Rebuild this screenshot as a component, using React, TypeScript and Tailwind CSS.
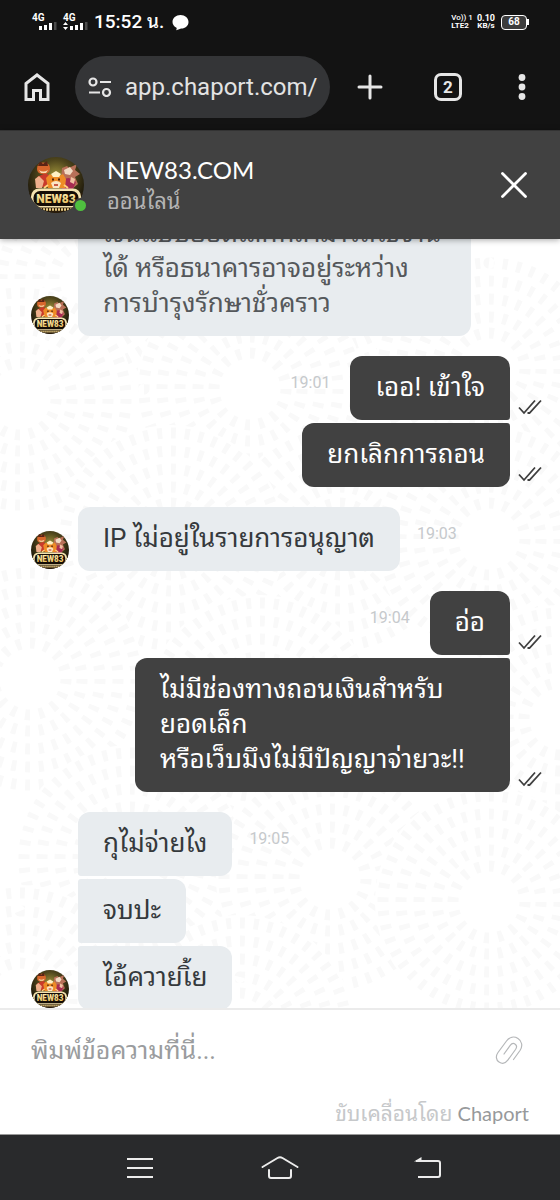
import React from "react";

const RINGS = [106, 88, 70, 52, 36];
const BURSTS = [
  [330, 20],
  [90, 40],
  [20, 160],
  [250, 150],
  [489, 130],
  [340, 300],
  [171, 300],
  [489, 300],
  [30, 440],
  [260, 470],
  [560, 480],
  [130, 620],
  [330, 640],
  [489, 663],
  [20, 760],
  [240, 790],
];

function ChatBackdrop() {
  return (
    <svg className="absolute inset-0 h-full w-full" aria-hidden="true">
      {BURSTS.map(([cx, cy]) => (
        <g key={`${cx}-${cy}`} fill="none" stroke="#f9f9f9" strokeWidth="11">
          <circle cx={cx} cy={cy} r="114" fill="#fff" stroke="none" />
          {RINGS.map((r) => (
            <circle key={r} cx={cx} cy={cy} r={r} pathLength={Math.round(r / 2.2) * 14} strokeDasharray="5 9" />
          ))}
        </g>
      ))}
    </svg>
  );
}

function Avatar({ className }: { className: string }) {
  return (
    <svg viewBox="0 0 56 56" className={className} role="img" aria-label="NEW83">
      <defs>
        <radialGradient id="glow" cx="50%" cy="35%" r="60%">
          <stop offset="0" stopColor="#a3963c" />
          <stop offset="0.5" stopColor="#4f461c" />
          <stop offset="1" stopColor="#171208" />
        </radialGradient>
        <linearGradient id="gold" x1="0" y1="0" x2="0" y2="1">
          <stop offset="0" stopColor="#fff3b8" />
          <stop offset="1" stopColor="#e3b64e" />
        </linearGradient>
        <clipPath id="disc">
          <circle cx="28" cy="28" r="28" />
        </clipPath>
      </defs>
      <g clipPath="url(#disc)">
        <rect width="56" height="56" fill="url(#glow)" />
        <path d="M9 20l9-4 6 5-1 9H11z" fill="#c93a2b" />
        <path d="M7 22l4-3 5 5-2 7H8z" fill="#efb08c" />
        <path d="M9 12q0-6 6-6.500 7 0 7 6 0 5-6.500 5.500Q9 17 9 12z" fill="#d8662c" />
        <path d="M10 9l2-5 3 3 4-3 1 5z" fill="#5b2415" />
        <path d="M11 13q4 3 9 0l-2 3h-5z" fill="#f8dfb2" />
        <path d="M34 11l5-2 2 2 8-4-2 6 5 4-5 3 3 7-6 5h-9l-2-9z" fill="#b87058" />
        <path d="M36 13l6-3 3 4-3 4-5-1z" fill="#f3dcc4" />
        <path d="M34 22l7-1 7 4-3 7H34z" fill="#a72b52" />
        <path d="M43 20l4 2-1 5-4-2z" fill="#f0c0a0" />
        <path d="M18 21l4-4 3 2h6l4-2 3 5-1 9H20z" fill="#ee8b26" />
        <path d="M23 17l5-3 5 3-2 3h-6z" fill="#fff0c4" />
        <path d="M23 26q5-4 10 0l-2 5h-6z" fill="#fbe6c5" />
        <path d="M20 28l-4 3M36 28l4 3" stroke="#ffd27a" strokeWidth="2" />
        <path d="M25 21.500v2M31 21.500v2" stroke="#3c1808" strokeWidth="1.800" />
        <path d="M26 28h4" stroke="#b92c1e" strokeWidth="1.500" />
        <rect x="0" y="36" width="56" height="20" fill="#2a1c0a" />
        <rect x="3" y="31.500" width="50" height="19" rx="8" fill="#f4e3b0" />
        <rect x="5.500" y="34" width="45" height="15" rx="6.500" fill="#140d06" />
        <path d="M12 52.500h32" stroke="#e9cd86" strokeWidth="2.500" strokeDasharray="2 1" />
        <text
          x="28"
          y="45.800"
          textAnchor="middle"
          fill="url(#gold)"
          className="font-['Roboto'] text-[12px] font-black"
        >
          NEW83
        </text>
      </g>
    </svg>
  );
}

function Signal({ arrows }: { arrows?: boolean }) {
  return (
    <div className="flex w-[25px] flex-col items-start">
      <span className="text-[10px] leading-[8px] font-bold">4G</span>
      <svg viewBox="0 0 25 8" className="h-2 w-[25px]" aria-hidden="true">
        {arrows && <path d="M0 3l2.500-3 2.500 3zM0 5l2.500 3L5 5z" fill="#fff" />}
        <path d="M7 4h3v4H7zM12 3h3v5h-3zM17 1h3v7h-3z" fill="#fff" />
        <path d="M22 0h2.500v8H22z" fill="#4a4a4a" />
      </svg>
    </div>
  );
}

function StatusBar() {
  return (
    <div className="flex h-11 items-center pr-[31px] pl-8 text-white">
      <Signal />
      <div className="ml-1.5">
        <Signal arrows />
      </div>
      <span className="ml-1.5 text-[19px] leading-6 font-medium whitespace-nowrap">15:52 น.</span>
      <svg viewBox="0 0 17 17" className="ml-2 h-[17px] w-[17px]" aria-hidden="true">
        <path d="M8.500 1C13 1 16.500 4 16.500 8S13 14.500 9.500 14.500C8 14.500 6.500 16 4 16.200c.8-1 .8-1.800.5-2.400C2 12.500.5 10.500.5 8 .5 4 4 1 8.500 1z" fill="#fff" />
      </svg>
      <div className="ml-auto flex items-center text-[9px] leading-[8px] font-bold">
        <div className="text-[8px] whitespace-nowrap">
          <div className="font-medium">Vo)) 1</div>
          <div>LTE2</div>
        </div>
        <div className="ml-1 text-center">
          <div>0.10</div>
          <div className="text-[8px]">KB/s</div>
        </div>
        <div className="ml-1.5 flex items-center">
          <div className="flex h-[15px] w-[26px] items-center justify-center rounded-[4px] border border-white bg-[#3c3c3c] text-[10px]">68</div>
          <div className="h-1.5 w-[2px] bg-white" />
        </div>
      </div>
    </div>
  );
}

function BrowserBar() {
  return (
    <div className="flex h-[86px] items-center pr-7 pl-[22px] text-[#e6e6e6]">
      <button type="button" aria-label="หน้าแรก" className="flex w-[30px] justify-center">
        <svg viewBox="0 0 26 28" className="h-7 w-[26px]" fill="none" stroke="currentColor" strokeWidth="3">
          <path d="M2 26.500V10.500L13 2l11 8.500v16h-7.500v-9h-7v9z" />
        </svg>
      </button>
      <div className="ml-[23px] flex h-[62px] min-w-0 flex-1 items-center rounded-full bg-[#343537] pr-3 pl-[13px]">
        <svg viewBox="0 0 24 20" className="h-5 w-6 shrink-0" fill="none" stroke="currentColor" strokeWidth="2.200" aria-hidden="true">
          <circle cx="5" cy="5" r="3.500" />
          <path d="M12 5h11M1 15.500h11" />
          <circle cx="18.500" cy="15.500" r="3.500" />
        </svg>
        <input
          aria-label="ที่อยู่เว็บ"
          readOnly
          defaultValue="app.chaport.com/"
          className="ml-[13px] h-10 w-full min-w-0 bg-transparent text-[24px] text-[#e3e3e3] outline-none"
        />
      </div>
      <button type="button" aria-label="แท็บใหม่" className="ml-[27px]">
        <svg viewBox="0 0 26 26" className="h-[26px] w-[26px]" stroke="currentColor" strokeWidth="3" strokeLinecap="round">
          <path d="M13 2v22M2 13h22" />
        </svg>
      </button>
      <button type="button" aria-label="แท็บ" className="ml-[51px] flex h-7 w-7 items-center justify-center rounded-[7px] border-[3px] border-current text-[17px] leading-5 font-bold">
        2
      </button>
      <button type="button" aria-label="เมนู" className="ml-[50px] flex w-[20px] justify-center">
        <svg viewBox="0 0 8 26" className="h-[26px] w-2" fill="currentColor">
          <circle cx="4" cy="3.500" r="3.400" />
          <circle cx="4" cy="13" r="3.400" />
          <circle cx="4" cy="22.500" r="3.400" />
        </svg>
      </button>
    </div>
  );
}

function Ticks() {
  return (
    <svg viewBox="0 0 24 16" className="mb-[5px] h-4 w-6 shrink-0" fill="none" stroke="#3f3f3f" strokeWidth="1.800" aria-label="อ่านแล้ว">
      <path d="M1 8.500l5 5.500L17 1.500M9.500 14l2 0L23 1.500" />
    </svg>
  );
}

type Side = "in" | "out";
type Message = { lines: string[]; time?: string; avatar?: boolean; faded?: boolean; wide?: boolean };

const GROUPS: { side: Side; messages: Message[] }[] = [
  {
    side: "in",
    messages: [
      {
        lines: ["เงินแบบยอดเล็กที่สามารถใช้งาน", "ได้ หรือธนาคารอาจอยู่ระหว่าง", "การบำรุงรักษาชั่วคราว"],
        avatar: true,
        faded: true,
      },
    ],
  },
  { side: "out", messages: [{ lines: ["เออ! เข้าใจ"], time: "19:01" }, { lines: ["ยกเลิกการถอน"] }] },
  { side: "in", messages: [{ lines: ["IP ไม่อยู่ในรายการอนุญาต"], time: "19:03", avatar: true }] },
  {
    side: "out",
    messages: [
      { lines: ["อ่อ"], time: "19:04" },
      { lines: ["ไม่มีช่องทางถอนเงินสำหรับ", "ยอดเล็ก", "หรือเว็บมึงไม่มีปัญญาจ่ายวะ!!"], wide: true },
    ],
  },
  {
    side: "in",
    messages: [
      { lines: ["กุไม่จ่ายไง"], time: "19:05" },
      { lines: ["จบปะ"] },
      { lines: ["ไอ้ควายเิ้ย"], avatar: true },
    ],
  },
];

function corners(side: Side, index: number, count: number) {
  const first = index === 0;
  const last = index === count - 1;
  if (side === "out") {
    return `rounded-[12px] ${first ? "" : "rounded-tr-[3px]"} ${last ? "" : "rounded-br-[3px]"}`;
  }
  return `rounded-[12px] ${first ? "" : "rounded-tl-[3px]"} ${last ? "" : "rounded-bl-[3px]"}`;
}

function Row({ side, message, index, count }: { side: Side; message: Message; index: number; count: number }) {
  const text = message.lines.map((line) => (
    <span key={line} className="block whitespace-nowrap">
      {line}
    </span>
  ));
  const time = message.time && (
    <time className="mt-[15px] block self-start text-[16px] leading-6 text-[#c6c9cc]">{message.time}</time>
  );
  if (side === "out") {
    return (
      <li className="flex items-end justify-end gap-2 pr-[18px]">
        <div className="flex items-end gap-5">
          {time}
          <div
            className={`bg-[#414141] px-[25px] pt-[14px] pb-[15px] text-white ${message.wide ? "w-[375px]" : ""} ${corners(side, index, count)}`}
          >
            {text}
          </div>
        </div>
        <Ticks />
      </li>
    );
  }
  return (
    <li className="flex items-end pl-[31px]">
      <div className="mr-[9px] w-[38px] shrink-0">
        {message.avatar && <Avatar className="mb-[2px] h-[38px] w-[38px]" />}
      </div>
      <div
        className={`bg-[#e8ecef] px-[25px] pt-[14px] pb-[15px] ${message.faded ? "w-[393px] text-[#55585b]" : "text-[#35393c]"} ${corners(side, index, count)}`}
      >
        {text}
      </div>
      <div className="ml-[17px] self-start">{time}</div>
    </li>
  );
}

export default function App() {
  return (
    <div className="flex h-screen flex-col bg-[#131313] font-['Roboto','Noto_Sans_Thai_Looped','Noto_Looped_Thai','Droid_Sans_Thai','Loma','Waree','Garuda','Umpush','FreeSans','Tahoma','Noto_Sans_Thai',sans-serif]">
      <div className="shrink-0">
        <StatusBar />
        <BrowserBar />
      </div>

      <header className="relative z-10 flex h-[109px] shrink-0 items-center border-t border-[#333] bg-[#414141] pr-8 pl-7 shadow-[0_1px_6px_rgba(0,0,0,0.35)]">
        <div className="relative">
          <Avatar className="h-14 w-14" />
          <span className="absolute right-[-4px] bottom-0 h-[15px] w-[15px] rounded-full border-2 border-[#414141] bg-[#4fc03f]" />
        </div>
        <div className="ml-[23px] pt-[2px]">
          <h1 className="font-['Lato'] text-[24px] leading-8 text-white">NEW83.COM</h1>
          <p className="text-[22px] leading-8 text-[#b4b4b4]">ออนไลน์</p>
        </div>
        <button type="button" aria-label="ปิด" className="ml-auto">
          <svg viewBox="0 0 28 28" className="h-7 w-7" stroke="#fff" strokeWidth="2.800" strokeLinecap="round">
            <path d="M2.500 2.500l23 23M25.500 2.500l-23 23" />
          </svg>
        </button>
      </header>

      <main className="relative flex min-h-0 flex-1 flex-col justify-end overflow-hidden bg-white">
        <ChatBackdrop />
        <div className="relative -mb-[2px] flex flex-col gap-5 text-[26px] leading-[35px]">
          {GROUPS.map((group, g) => (
            <ul key={g} className="flex flex-col gap-[3px]">
              {group.messages.map((message, i) => (
                <Row key={message.lines[0]} side={group.side} message={message} index={i} count={group.messages.length} />
              ))}
            </ul>
          ))}
        </div>
      </main>

      <footer className="flex h-[126px] shrink-0 flex-col justify-between border-t-2 border-[#ebebeb] bg-white pt-4 pr-[31px] pb-1 pl-[31px]">
        <div className="flex items-center">
          <input
            aria-label="ข้อความ"
            placeholder="พิมพ์ข้อความที่นี่..."
            className="h-12 min-w-0 flex-1 bg-transparent text-[25px] text-[#444] outline-none placeholder:text-[#9a9c9e]"
          />
          <button type="button" aria-label="แนบไฟล์" className="mr-[6px]">
            <svg viewBox="0 0 28 28" className="h-7 w-7" fill="none" stroke="#b5b7b9" strokeWidth="1.200" strokeLinecap="round">
              <path d="M18.500 23.500l6.500-9C28 10 27 5 23 2.500S14.500 1 11.500 5L3 16.500C.5 20 1 24 4 26s6.500 1.300 8.800-1.800L20.500 13.500c1.500-2.200 1.200-4.200-.3-5.300s-3.500-.8-5 1.200L9 18" />
            </svg>
          </button>
        </div>
        <p className="text-right text-[21px] leading-8 text-[#c6c8ca]">
          ขับเคลื่อนโดย{" "}
          <a href="https://www.chaport.com" className="font-['Lato'] text-[20px] text-[#97999b]">
            Chaport
          </a>
        </p>
      </footer>

      <nav className="grid h-[66px] shrink-0 grid-cols-3 place-items-center border-t border-[#999] bg-[#292a2c] px-[70px] text-[#ececec]">
        <button type="button" aria-label="แอปล่าสุด">
          <svg viewBox="0 0 38 28" className="h-7 w-[38px]" stroke="currentColor" strokeWidth="2">
            <path d="M6 5h26M6 14h26M6 23h26" />
          </svg>
        </button>
        <button type="button" aria-label="หน้าหลัก">
          <svg viewBox="0 0 38 28" className="h-7 w-[38px]" fill="none" stroke="currentColor" strokeWidth="2" strokeLinecap="round">
            <path d="M1.500 13L16.500 4q2.500-1.500 5 0L36.500 13M8 16v6q0 2 2 2h18q2 0 2-2v-6" />
          </svg>
        </button>
        <button type="button" aria-label="ย้อนกลับ">
          <svg viewBox="0 0 54 28" className="h-7 w-[54px]" fill="none" stroke="currentColor" strokeWidth="2">
            <path d="M23 7h22q2 0 2 2v12q0 2-2 2H25" />
            <path d="M21 7.500L28.500 3v4.500z" fill="currentColor" stroke="none" />
          </svg>
        </button>
      </nav>
    </div>
  );
}
